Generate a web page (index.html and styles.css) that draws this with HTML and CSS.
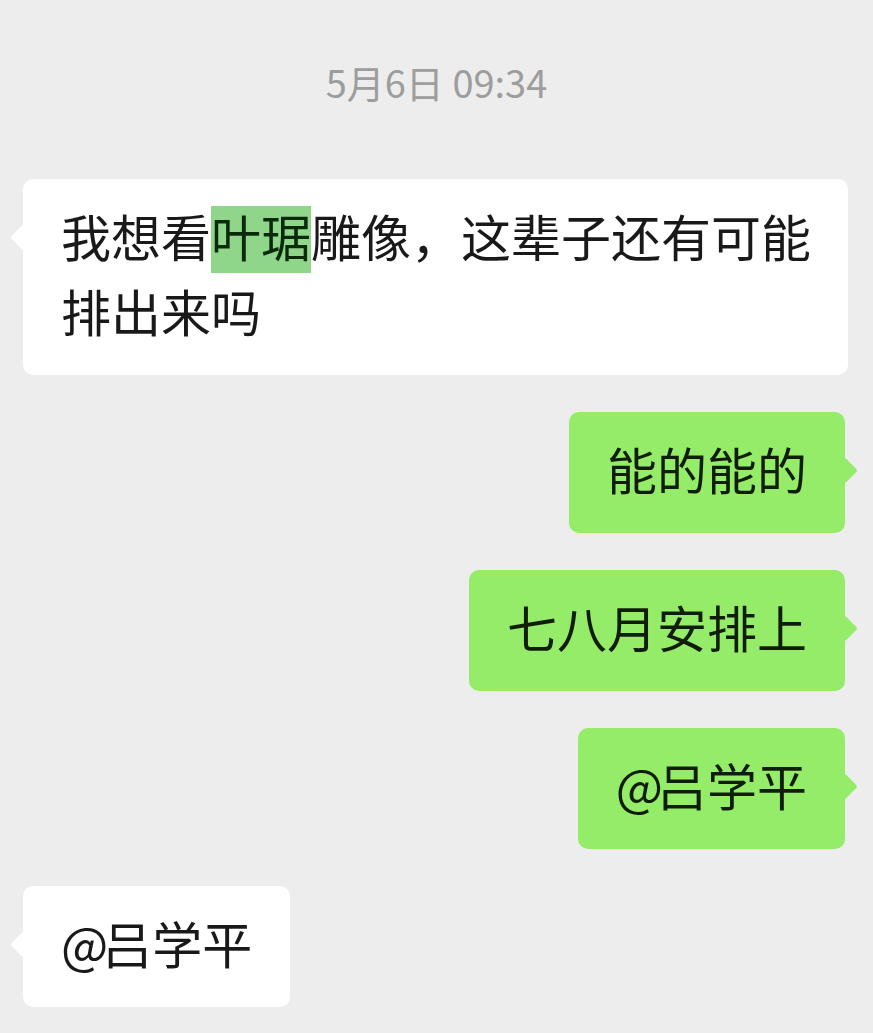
FILE: index.html
```html
<!DOCTYPE html>
<html lang="zh-CN">
<head>
    <meta charset="UTF-8">
    <meta name="viewport" content="width=device-width, initial-scale=1.0">
    <title>聊天记录</title>
    <link rel="stylesheet" href="styles.css">
</head>
<body>

  <div class="chat">

    <div class="time">5月6日 09:34</div>

    <div class="row left">
      <div class="bubble white wide">我想看<span class="mark">叶琚</span>雕像，这辈子还有可能排出来吗</div>
    </div>

    <div class="row right">
      <div class="bubble green">能的能的</div>
    </div>

    <div class="row right">
      <div class="bubble green">七八月安排上</div>
    </div>

    <div class="row right">
      <div class="bubble green"><span class="at">@</span>吕学平</div>
    </div>

    <div class="row left">
      <div class="bubble white"><span class="at">@</span>吕学平</div>
    </div>

  </div>

</body>
</html>
```

FILE: styles.css
```css
body {
  margin: 0;
  background: #ededed;
  font-family: "Noto Sans CJK SC", "Noto Sans", sans-serif;
}

.chat {
  display: flex;
  flex-direction: column;
  gap: 37px;
  padding-top: 57px;
}

.time {
  text-align: center;
  font-size: 38px;
  line-height: 50px;
  color: #9d9d9d;
  margin-bottom: 35px;
}

.row {
  display: flex;
}

.row.left {
  justify-content: flex-start;
  padding-left: 23px;
}

.row.right {
  justify-content: flex-end;
  padding-right: 28px;
}

.bubble {
  position: relative;
  padding: 19px 38px 27px;
  border-radius: 10px;
  font-size: 50px;
  line-height: 75px;
  color: #191919;
}

.bubble.wide {
  max-width: 751px;
  padding-right: 36px;
}

.bubble::before {
  content: "";
  position: absolute;
  top: 49px;
  width: 19px;
  height: 19px;
  border-radius: 3px;
  transform: rotate(45deg);
}

.white {
  background: #ffffff;
}

.white::before {
  left: -9px;
  background: #ffffff;
}

.green {
  background: #95ec69;
  color: #0f1d09;
}

.green::before {
  right: -9px;
  background: #95ec69;
}

.at {
  letter-spacing: -6px;
}

.mark {
  display: inline-block;
  background: #8fd68b;
  color: #0b2a0b;
  line-height: 58px;
  padding-bottom: 9px;
}
```
